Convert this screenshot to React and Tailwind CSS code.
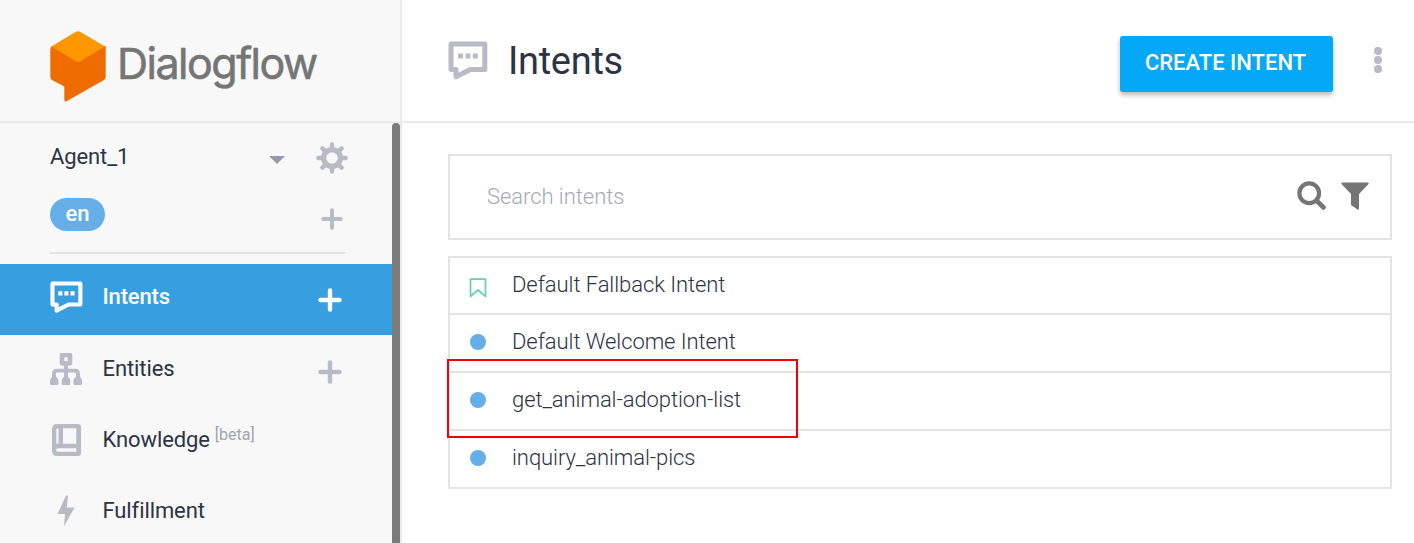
function Chat({ className }) {
  return (
    <svg viewBox="0 0 40 40" className={className}>
      <path d="M3 3H36.800V28.500H22.500L8 35.800V28.500H3Z" fill="none" stroke="currentColor" strokeWidth="5" strokeLinejoin="round" />
      <path d="M10 12.500h5v5h-5zM17.400 12.500h5v5h-5zM24.800 12.500h5v5h-5z" fill="currentColor" />
    </svg>
  );
}

function Plus({ className }) {
  return (
    <svg viewBox="0 0 24 24" className={className}>
      <path d="M12 2.500V21.500M2.500 12H21.500" fill="none" stroke="currentColor" strokeWidth="4.4" strokeLinecap="round" />
    </svg>
  );
}

function Gear({ className }) {
  return (
    <svg viewBox="0 0 32 32" className={className}>
      <circle cx="16" cy="16" r="8.4" fill="none" stroke="currentColor" strokeWidth="5.2" />
      <g stroke="currentColor" strokeWidth="4.4" strokeLinecap="round">
        <path d="M16 2.4V7M16 25V29.6M2.4 16H7M25 16H29.6M6.4 6.4L9.4 9.4M22.6 22.6L25.6 25.6M6.4 25.6L9.4 22.6M22.6 9.4L25.6 6.4" />
      </g>
    </svg>
  );
}

function Sitemap({ className }) {
  return (
    <svg viewBox="0 0 32 32" className={className}>
      <rect x="12" y="2" width="8" height="8.500" rx="0.500" fill="none" stroke="currentColor" strokeWidth="4.600" strokeLinejoin="round" />
      <path d="M16 11V26M4 26V20.500Q4 17.600 7 17.600H25Q28 17.600 28 20.500V26" fill="none" stroke="currentColor" strokeWidth="3.900" />
      <path d="M2 24H6.500Q8.500 25.500 8.500 28V30.500Q8.500 32 7 32H1.500Q0 32 0 30.500V28Q0 25.500 2 24ZM13.700 24H18.300Q20.300 25.500 20.300 28V30.500Q20.300 32 18.800 32H13.200Q11.700 32 11.700 30.500V28Q11.700 25.500 13.700 24ZM25.500 24H30Q32 25.500 32 28V30.500Q32 32 30.500 32H25Q23.500 32 23.500 30.500V28Q23.500 25.500 25.500 24Z" fill="currentColor" />
    </svg>
  );
}

function Book({ className }) {
  return (
    <svg viewBox="0 0 29 32" className={className}>
      <path fill="currentColor" fillRule="evenodd" d="M5 0H26q3 0 3 3V29q0 3-3 3H5q-5 0-5-5V5q0-5 5-5zM4.300 5V19.800H6.500V4.300zM11 4.300V19.800H24.300V4.300zM6 24.300q-2 0-2 1.700t2 1.700H24.300V24.300z" />
    </svg>
  );
}

function Logo() {
  return (
    <svg viewBox="0 0 56 71" className="mt-px h-[71px] w-14 shrink-0">
      <path d="M0.300 18Q.3 16 2 15L55.700 15V46Q55.700 48 54 49L17 70Q14.300 71.500 14.300 68.500V55.500L2 49Q.3 48 .3 46Z" fill="#ef6c00" />
      <path d="M1.200 15.500L25.500 1Q28 -.3 30.500 1L55 15.500L28 31.500Z" fill="#ff9800" />
    </svg>
  );
}

function NavItem({ icon, label, beta, active, plus }) {
  return (
    <div className={`flex h-[71px] shrink-0 items-center pb-1 ${active ? "bg-[#379fe0] text-white" : "text-[#2b3345]"}`}>
      <div className={`ml-[50px] flex w-8 justify-center ${active ? "text-white" : "text-[#b7bbc6]"}`}>{icon}</div>
      <div className={`ml-[20.5px] text-[22px] leading-7 whitespace-nowrap ${active ? "pb-0.5 font-medium tracking-[-0.15px]" : "tracking-[-0.1px]"}`}>
        {label}
        {beta && <span className="relative -top-[7px] ml-[5px] text-[16px] leading-none tracking-normal text-[#a0a4b1]">[beta]</span>}
      </div>
      {plus && (
        <Plus className={`mr-[50px] ml-auto size-6 ${active ? "mt-1 text-white" : "mt-1.5 text-[#b7bbc6]"}`} />
      )}
    </div>
  );
}

function IntentRow({ name, bookmark, height, marked }) {
  return (
    <div className={`relative flex items-center border-[#e3e3e3] text-[22px] font-light text-[#2b3345] ${height}`}>
      <div className="ml-5 flex w-4 justify-center">
        {bookmark ? (
          <svg viewBox="0 0 18 20" className="mt-1 h-5 w-[18px] shrink-0">
            <path d="M1.500 1.200H16.500V18.300L9 12L1.500 18.300Z" fill="none" stroke="#68ceb0" strokeWidth="1.700" strokeLinejoin="round" />
          </svg>
        ) : (
          <span className="-mt-0.5 size-4 shrink-0 rounded-full bg-[#65aee8]" />
        )}
      </div>
      <span className="ml-[26px] pb-0.5 leading-7 tracking-[-0.08px] whitespace-nowrap">{name}</span>
      {marked && <div className="pointer-events-none absolute -top-[14px] -left-[3px] h-[79px] w-[351px] border-2 border-[#f40000]" />}
    </div>
  );
}

export default function App() {
  return (
    <div className="flex h-[543px] w-[1414px] overflow-hidden bg-white font-['Roboto',sans-serif]">
      <aside className="flex w-[400px] shrink-0 flex-col bg-[#f8f8f8]">
        <div className="flex h-[123px] shrink-0 items-center border-b-2 border-[#e9e9e9] pt-2.5 pl-[50px]">
          <Logo />
          <span className="-mt-1 ml-[11px] font-['Inter',sans-serif] text-[43px] leading-none tracking-[-1.5px] text-[#757575] [-webkit-text-stroke:0.6px_#757575]">Dialogflow</span>
        </div>
        <div className="flex min-h-0 flex-1">
          <div className="flex min-w-0 flex-1 flex-col">
            <div className="ml-[50px] flex h-[131px] w-[296px] shrink-0 flex-col border-b-2 border-[#e3e3e3]">
              <div className="flex h-[68px] items-center text-[22px] text-[#2b3345]">
                <span className="pb-0.5 tracking-[-0.1px]">Agent_1</span>
                <svg viewBox="0 0 16 8" className="mt-1.5 ml-auto h-2 w-4"><path d="M0 0H16L8 8Z" fill="#969aaa" /></svg>
                <Gear className="mt-0.5 -mr-[1.5px] ml-[31px] size-8 text-[#b7bbc6]" />
              </div>
              <div className="flex items-start justify-between pt-[7px]">
                <span className="flex h-[33px] w-[55px] items-center justify-center rounded-full bg-[#65aee8] pb-0.5 text-[22px] font-medium text-white">en</span>
                <Plus className="mt-2.5 mr-[3px] size-[22px] text-[#b7bbc6]" />
              </div>
            </div>
            <div className="h-2.5 shrink-0" />
            <NavItem active plus label="Intents" icon={<Chat className="ml-px size-[33px] shrink-0" />} />
            <NavItem plus label="Entities" icon={<Sitemap className="size-8" />} />
            <NavItem label="Knowledge" beta icon={<Book className="h-8 w-[29px]" />} />
            <NavItem
              label="Fulfillment"
              icon={
                <svg viewBox="0 0 18 32" className="h-8 w-[18px]">
                  <path d="M9 .5L.5 19H8L7 31.500L17.500 12.500H9.800L11 .5Z" fill="#b7bbc6" />
                </svg>
              }
            />
          </div>
          <div className="w-2 shrink-0 rounded-t bg-[#7b7b7b]" />
        </div>
      </aside>
      <div className="flex min-w-0 flex-1 flex-col border-l-2 border-[#e9e9e9]">
        <header className="flex h-[123px] shrink-0 items-center border-b-2 border-[#e9e9e9]">
          <Chat className="ml-[46px] size-10 text-[#b7bbc6]" />
          <h1 className="ml-5 text-[38px] leading-none font-normal tracking-[-0.3px] text-[#2b3345]">Intents</h1>
          <button className="mt-1.5 ml-auto flex h-[56px] w-[213px] items-center justify-center rounded-[3px] bg-[#03a9f7] pr-0.5 pb-0.5 text-[22px] font-medium text-white shadow-[0_3px_5px_rgba(0,0,0,0.28)]">CREATE INTENT</button>
          <div className="mr-8 mb-0.5 ml-[41px] flex flex-col gap-px">
            <span className="size-2 rounded-full bg-[#b7bbc6]" />
            <span className="size-2 rounded-full bg-[#b7bbc6]" />
            <span className="size-2 rounded-full bg-[#b7bbc6]" />
          </div>
        </header>
        <main className="flex flex-col pt-[31px] pr-[22px] pl-[46px]">
          <div className="flex h-[86px] items-center border-2 border-[#e3e3e3] pr-[21px] pl-[37px]">
            <span className="pb-0.5 text-[22px] font-light tracking-[-0.05px] text-[#a5a9b5]">Search intents</span>
            <svg viewBox="0 0 28 28" className="-mt-1 ml-auto size-[29px]">
              <circle cx="11.800" cy="11.800" r="9.500" fill="none" stroke="#757575" strokeWidth="4" />
              <path d="M18.800 18.800L25.500 25.500" stroke="#757575" strokeWidth="4.600" strokeLinecap="round" />
            </svg>
            <svg viewBox="0 0 28 28" className="-mt-0.5 ml-[15px] size-7">
              <path d="M1 .5H27Q28 .5 27.500 2L18 12V27Q17.500 28 16.500 27.500L10 23V12L.5 2Q0 .5 1 .5Z" fill="#757575" />
            </svg>
          </div>
          <div className="mt-4 flex flex-col border-2 border-[#e3e3e3]">
            <IntentRow name="Default Fallback Intent" bookmark height="h-[57px] border-b-2" />
            <IntentRow name="Default Welcome Intent" height="h-[58px] border-b-2" />
            <IntentRow name="get_animal-adoption-list" marked height="h-[58px] border-b-2" />
            <IntentRow name="inquiry_animal-pics" height="h-[56px]" />
          </div>
        </main>
      </div>
    </div>
  );
}
